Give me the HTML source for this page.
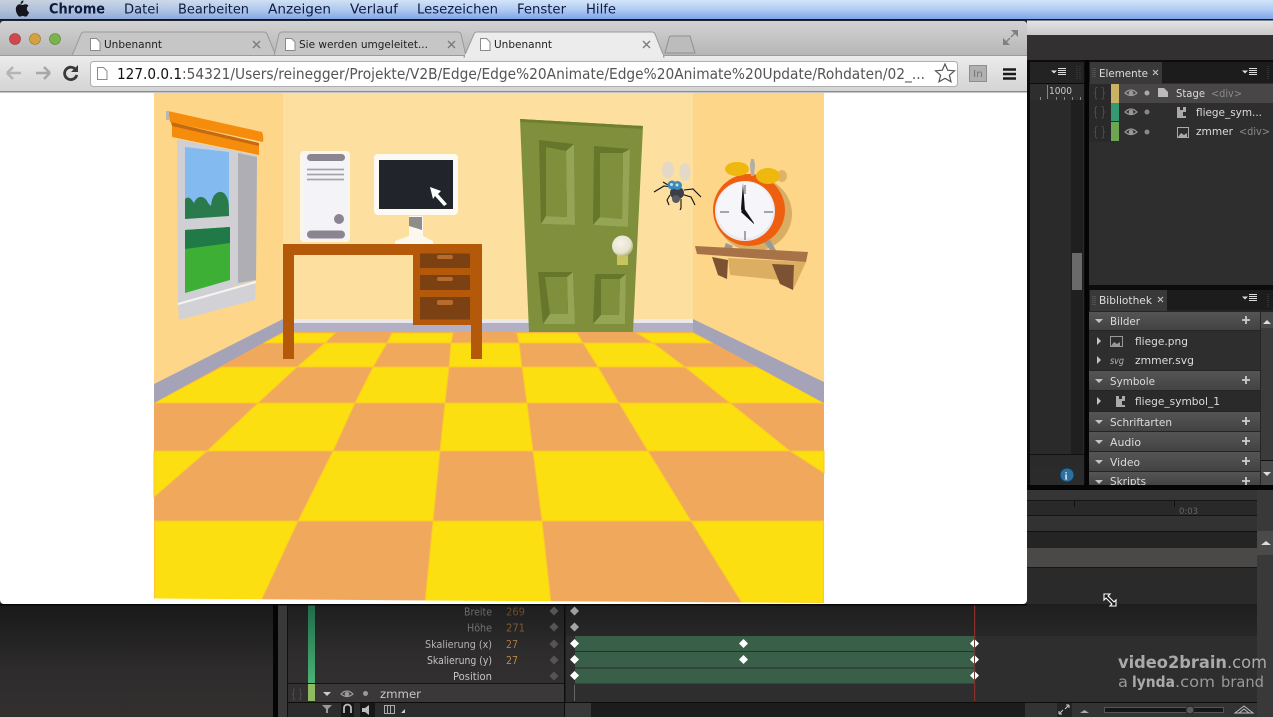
<!DOCTYPE html>
<html><head><meta charset="utf-8"><title>Unbenannt</title>
<style>html,body{margin:0;padding:0;background:#302e2e;overflow:hidden}svg{display:block}text{font-family:"DejaVu Sans","Liberation Sans",sans-serif;white-space:pre}</style></head>
<body>
<svg xmlns="http://www.w3.org/2000/svg" width="1273" height="717" viewBox="0 0 1273 717">
<defs>
<linearGradient id="menu" x1="0" y1="0" x2="0" y2="1"><stop offset="0" stop-color="#d3e4fa"/><stop offset=".5" stop-color="#b0cbf3"/><stop offset="1" stop-color="#7fa5ea"/></linearGradient>
<linearGradient id="menuL" x1="0" y1="0" x2="1" y2="0"><stop offset="0" stop-color="#b5b5b5" stop-opacity=".45"/><stop offset=".5" stop-color="#b5b5b5" stop-opacity=".1"/><stop offset="1" stop-color="#b5b5b5" stop-opacity="0"/></linearGradient>
<linearGradient id="strip" x1="0" y1="0" x2="0" y2="1"><stop offset="0" stop-color="#d2d2d2"/><stop offset="1" stop-color="#b2b2b2"/></linearGradient>
<linearGradient id="bar" x1="0" y1="0" x2="0" y2="1"><stop offset="0" stop-color="#ececec"/><stop offset="1" stop-color="#d4d4d4"/></linearGradient>
<linearGradient id="hdr" x1="0" y1="0" x2="0" y2="1"><stop offset="0" stop-color="#555"/><stop offset="1" stop-color="#434343"/></linearGradient>
<linearGradient id="btm" x1="0" y1="0" x2="0" y2="1"><stop offset="0" stop-color="#191919"/><stop offset=".6" stop-color="#2e2c2c"/><stop offset="1" stop-color="#322f2f"/></linearGradient>
<linearGradient id="tl" x1="0" y1="0" x2="0" y2="1"><stop offset="0" stop-color="#1e1e1e"/><stop offset=".5" stop-color="#2e2c2c"/><stop offset="1" stop-color="#333131"/></linearGradient>
<linearGradient id="grn" x1="0" y1="0" x2="0" y2="1"><stop offset="0" stop-color="#1e6a4a"/><stop offset="1" stop-color="#4ab274"/></linearGradient>
<linearGradient id="top" x1="0" y1="0" x2="0" y2="1"><stop offset="0" stop-color="#e4e4e4"/><stop offset="1" stop-color="#c8c8c8"/></linearGradient>
<radialGradient id="knob" cx=".4" cy=".35" r=".7"><stop offset="0" stop-color="#f6f4ea"/><stop offset=".7" stop-color="#e6e2cc"/><stop offset="1" stop-color="#a8a670"/></radialGradient>
<g id="eye"><path d="M-6 0Q0-6 6 0Q0 5-6 0Z" fill="none" stroke="#9a9a9a" stroke-width="1.2"/><circle r="2.3" fill="#9a9a9a"/></g>
<g id="menuic"><path d="M-8-2h6l-3 3z" fill="#ddd"/><path d="M-1-4h8M-1-2h8M-1 0h8M-1 2h8" stroke="#ddd" stroke-width="1"/></g>
<g id="plus"><path d="M-4 0h8M0-4v8" stroke="#ccc" stroke-width="1.8"/></g>
<path id="td" d="M-4-2h8l-4 4z" fill="#c4c4c4"/>
<path id="tr" d="M-2-4l4 4-4 4z" fill="#c4c4c4"/>
<path id="dia" d="M0-4.5L4.5 0 0 4.5-4.5 0z"/>
<path id="doc" d="M0 0h6l3.500 3.500V12H0z" fill="#fff" stroke="#8a8a8a" stroke-width="1"/>
<g id="brace"><text x="0" y="0" font-size="13" fill="#565656" textLength="13" lengthAdjust="spacingAndGlyphs">{ }</text></g>
</defs>

<!-- base -->
<rect width="1273" height="717" fill="#302e2e"/>

<!-- menu bar -->
<rect width="1273" height="19" fill="url(#menu)"/>
<rect width="520" height="19" fill="url(#menuL)"/>
<rect y="19" width="1273" height="1.5" fill="#0c1830"/>
<path d="M23.4 1.4c-1.6.2-3 1.7-2.8 3.500 1.600.1 3-1.600 2.800-3.500zM26.800 9.800c0-1.900 1.600-2.800 1.700-2.900-.9-1.400-2.400-1.600-2.900-1.600-1.200-.1-2.400.7-3 .7s-1.600-.7-2.700-.7c-1.400 0-2.700.8-3.400 2.100-1.400 2.500-.4 6.200 1 8.200.7 1 1.500 2.100 2.600 2 1 0 1.400-.7 2.700-.7s1.600.7 2.700.7 1.900-1 2.500-2c.8-1.100 1.100-2.200 1.100-2.300 0 0-2.300-.9-2.300-4.300z" fill="#15151f" transform="translate(0,-1)"/>
<g fill="#0f1b3e" font-size="13.5">
<text x="49" y="13.5" font-weight="bold" textLength="56" lengthAdjust="spacingAndGlyphs" font-size="14">Chrome</text>
<text x="124" y="13.5" textLength="35" lengthAdjust="spacingAndGlyphs">Datei</text>
<text x="178" y="13.5" textLength="71" lengthAdjust="spacingAndGlyphs">Bearbeiten</text>
<text x="268" y="13.5" textLength="63" lengthAdjust="spacingAndGlyphs">Anzeigen</text>
<text x="350" y="13.5" textLength="48" lengthAdjust="spacingAndGlyphs">Verlauf</text>
<text x="417" y="13.5" textLength="81" lengthAdjust="spacingAndGlyphs">Lesezeichen</text>
<text x="517" y="13.5" textLength="49" lengthAdjust="spacingAndGlyphs">Fenster</text>
<text x="586" y="13.5" textLength="30" lengthAdjust="spacingAndGlyphs">Hilfe</text>
</g>

<!-- desktop strip behind -->
<rect x="1027" y="20.5" width="246" height="15" fill="url(#top)"/>
<rect x="1027" y="35" width="246" height="27" fill="#323030"/>

<!-- upper right panels -->
<rect x="1027" y="60" width="246" height="430" fill="#0c0c0c"/>
<rect x="1030" y="62" width="54" height="21" fill="#232323"/>
<rect x="1030" y="84" width="54" height="16" fill="#2e2e2e"/>
<rect x="1030" y="100" width="54" height="368" fill="#2b2a2a"/>
<rect x="1071" y="100" width="12" height="354" fill="#1f1f1f"/>
<rect x="1072" y="253" width="10" height="37" fill="#6a6a6a"/>
<rect x="1030" y="466" width="54" height="20" fill="#2c2b2b"/>
<rect x="1030" y="454" width="54" height="1" fill="#111"/>
<path d="M1047.5 85v14M1040.500 97v3M1056.500 97v3M1064.500 97v3M1072.500 97v3M1080.500 97v3" stroke="#888" stroke-width="1"/>
<text x="1049" y="94" font-size="10" fill="#ccc" textLength="23" lengthAdjust="spacingAndGlyphs">1000</text>
<use href="#menuic" x="1059" y="72.5"/>
<path d="M1077 66v13M1080 66v13" stroke="#444" stroke-dasharray="1 1"/>
<circle cx="1067" cy="475" r="7" fill="#2d6f9e"/><circle cx="1067" cy="475" r="7" fill="none" stroke="#10364f"/>
<text x="1064.5" y="479.5" font-size="11" font-weight="bold" fill="#dbe9f2" style="font-family:'Liberation Serif',serif">i</text>

<rect x="1089" y="62" width="184" height="224" fill="#2f2e2e"/>
<rect x="1089" y="62" width="184" height="21" fill="#1c1c1c"/>
<rect x="1090" y="62" width="72" height="22" fill="#3a3939"/>
<path d="M1093 68v10M1095 68v10" stroke="#666" stroke-dasharray="1 1"/>
<text x="1099" y="77" font-size="10.5" fill="#dedede" textLength="49" lengthAdjust="spacingAndGlyphs">Elemente</text>
<path d="M1153 70l5 5M1158 70l-5 5" stroke="#ccc"/>
<use href="#menuic" x="1250" y="72.5"/>
<path d="M1268 66v13" stroke="#444" stroke-dasharray="1 1"/>
<rect x="1089" y="84" width="184" height="19" fill="#484646"/>
<rect x="1089" y="84" width="22" height="58" fill="#2a2929"/>
<rect x="1111" y="84" width="8" height="19" fill="#c9b264"/>
<rect x="1111" y="103" width="8" height="18" fill="#359a72"/>
<rect x="1111" y="122" width="8" height="19" fill="#6ea552"/>
<use href="#brace" x="1093" y="97"/><use href="#brace" x="1093" y="116"/><use href="#brace" x="1093" y="136"/>
<use href="#eye" x="1131" y="93"/><use href="#eye" x="1131" y="112"/><use href="#eye" x="1131" y="132"/>
<circle cx="1147" cy="93" r="2.5" fill="#aaa"/><circle cx="1147" cy="112" r="2.5" fill="#888"/><circle cx="1147" cy="132" r="2.5" fill="#888"/>
<path d="M1158 88h6l4 4v5h-10z" fill="#bbb"/>
<text x="1176" y="97" font-size="10.5" fill="#dcdcdc" textLength="29" lengthAdjust="spacingAndGlyphs">Stage</text>
<text x="1211" y="97" font-size="10.5" fill="#8a8a8a" textLength="31" lengthAdjust="spacingAndGlyphs">&lt;div&gt;</text>
<path d="M1177 107h3v3h3v-3h3v5h-3v4h3v2h-9z" fill="#aaa"/>
<text x="1196" y="116" font-size="10.5" fill="#dcdcdc" textLength="66" lengthAdjust="spacingAndGlyphs">fliege_sym...</text>
<rect x="1177.500" y="127.500" width="11" height="10" fill="none" stroke="#aaa"/><path d="M1178 137l3-4 3 2 3-2v4z" fill="#aaa"/>
<text x="1196" y="135" font-size="10.5" fill="#dcdcdc" textLength="37" lengthAdjust="spacingAndGlyphs">zmmer</text>
<text x="1239" y="135" font-size="10.5" fill="#8a8a8a" textLength="31" lengthAdjust="spacingAndGlyphs">&lt;div&gt;</text>

<!-- library -->
<rect x="1089" y="290" width="184" height="195" fill="#262525"/>
<rect x="1089" y="290" width="184" height="20" fill="#1c1c1c"/>
<rect x="1090" y="290" width="77" height="21" fill="#3a3939"/>
<path d="M1093 296v10M1095 296v10" stroke="#666" stroke-dasharray="1 1"/>
<text x="1099" y="304" font-size="10.5" fill="#dedede" textLength="53" lengthAdjust="spacingAndGlyphs">Bibliothek</text>
<path d="M1158 297l5 5M1163 297l-5 5" stroke="#ccc"/>
<use href="#menuic" x="1250" y="298.500"/>
<path d="M1268 294v13" stroke="#444" stroke-dasharray="1 1"/>
<rect x="1089" y="312" width="171" height="18" fill="url(#hdr)"/>
<rect x="1089" y="331" width="171" height="39" fill="#2f2e2e"/>
<rect x="1089" y="371" width="171" height="19" fill="url(#hdr)"/>
<rect x="1089" y="391" width="171" height="20" fill="#2b2a2a"/>
<rect x="1089" y="412" width="171" height="19" fill="url(#hdr)"/>
<rect x="1089" y="432" width="171" height="19" fill="url(#hdr)"/>
<rect x="1089" y="452" width="171" height="19" fill="url(#hdr)"/>
<rect x="1089" y="472" width="171" height="13" fill="url(#hdr)"/>
<rect x="1261" y="312" width="12" height="173" fill="#3c3b3b"/>
<rect x="1261" y="312" width="12" height="16" fill="#4a4a4a"/><path d="M1263 324l4-4 4 4z" fill="#ddd"/>
<rect x="1261" y="461" width="12" height="24" fill="#4a4a4a"/><rect x="1261" y="460" width="12" height="1" fill="#111"/><path d="M1263 472l4 4 4-4z" fill="#ddd"/>
<g font-size="10.5" fill="#dcdcdc">
<use href="#td" x="1099" y="321"/><text x="1110" y="325" textLength="30" lengthAdjust="spacingAndGlyphs">Bilder</text>
<use href="#td" x="1099" y="381"/><text x="1110" y="385" textLength="45" lengthAdjust="spacingAndGlyphs">Symbole</text>
<use href="#td" x="1099" y="422"/><text x="1110" y="426" textLength="62" lengthAdjust="spacingAndGlyphs">Schriftarten</text>
<use href="#td" x="1099" y="442"/><text x="1110" y="446" textLength="31" lengthAdjust="spacingAndGlyphs">Audio</text>
<use href="#td" x="1099" y="462"/><text x="1110" y="466" textLength="30" lengthAdjust="spacingAndGlyphs">Video</text>
<use href="#td" x="1099" y="482"/><text x="1110" y="485" textLength="36" lengthAdjust="spacingAndGlyphs">Skripts</text>
<text x="1135" y="345" textLength="53" lengthAdjust="spacingAndGlyphs">fliege.png</text>
<text x="1135" y="364" textLength="59" lengthAdjust="spacingAndGlyphs">zmmer.svg</text>
<text x="1135" y="405" textLength="85" lengthAdjust="spacingAndGlyphs">fliege_symbol_1</text>
</g>
<use href="#plus" x="1246" y="320"/><use href="#plus" x="1246" y="380"/><use href="#plus" x="1246" y="421"/><use href="#plus" x="1246" y="441"/><use href="#plus" x="1246" y="461"/><use href="#plus" x="1246" y="481"/>
<use href="#tr" x="1099" y="341"/><use href="#tr" x="1099" y="360"/><use href="#tr" x="1099" y="401"/>
<rect x="1110.500" y="336.500" width="12" height="10" fill="none" stroke="#999"/><path d="M1111 346l3-4 3 2 3-2v4z" fill="#999"/>
<text x="1110" y="364" font-size="10" font-style="italic" fill="#b4b4b4" textLength="14" lengthAdjust="spacingAndGlyphs">svg</text>
<path d="M1116 396h3v3h3v-3h3v5h-3v4h3v2h-9z" fill="#aaa"/>
<rect x="1085" y="285" width="188" height="5" fill="#0c0c0c"/>
<rect x="1085" y="60" width="4" height="430" fill="#050505"/>

<!-- timeline bars at right -->
<rect x="1027" y="485" width="246" height="5" fill="#050505"/>
<rect x="1027" y="490" width="230" height="10" fill="#363535"/>
<rect x="1027" y="500" width="230" height="16" fill="#2a2929"/>
<rect x="1027" y="500" width="230" height="1" fill="#151515"/>
<rect x="1027" y="515" width="230" height="1" fill="#151515"/>
<path d="M1074.500 501v6M1174.500 501v6" stroke="#111"/>
<text x="1179" y="514" font-size="9" fill="#666" textLength="19" lengthAdjust="spacingAndGlyphs">0:03</text>
<rect x="1027" y="516" width="230" height="15" fill="#333232"/>
<rect x="1027" y="531" width="230" height="1" fill="#111"/>
<rect x="1027" y="532" width="230" height="16" fill="#252424"/>
<rect x="1027" y="548" width="230" height="19" fill="#4a4948"/>
<rect x="1027" y="567" width="230" height="1" fill="#161616"/>
<rect x="1027" y="568" width="230" height="37" fill="#2b2a2a"/>
<rect x="1257" y="490" width="16" height="227" fill="#3a3939"/>
<rect x="1257" y="531" width="16" height="24" fill="#4a4a4a"/><path d="M1261 545l5-4 5 4z" fill="#ddd"/>

<!-- bottom region -->
<rect x="0" y="604" width="273" height="113" fill="url(#btm)"/>
<rect x="273" y="604" width="5" height="113" fill="#050505"/>
<rect x="278" y="604" width="9" height="113" fill="#3a3939"/>
<rect x="287" y="604" width="1" height="113" fill="#111"/>
<rect x="288" y="604" width="276" height="98" fill="url(#tl)"/>
<rect x="565" y="604" width="692" height="98" fill="url(#tl)"/>
<rect x="565" y="636" width="692" height="66" fill="#2f2e2e"/>
<rect x="564" y="604" width="1.5" height="113" fill="#0d0d0d"/>
<rect x="308" y="604" width="7" height="79" fill="url(#grn)"/>
<rect x="308" y="684" width="7" height="17" fill="#8fbc62"/>
<rect x="288" y="683" width="276" height="1" fill="#151515"/>
<rect x="315" y="684" width="249" height="18" fill="#3a3838"/>
<rect x="288" y="702" width="969" height="1" fill="#0d0d0d"/>
<rect x="288" y="703" width="276" height="14" fill="#2d2c2c"/>
<rect x="565" y="703" width="26" height="14" fill="#393838"/>
<rect x="591" y="703" width="434" height="14" fill="#1d1c1c"/>
<rect x="1025" y="703" width="232" height="14" fill="#343333"/>
<g font-size="10.5">
<text x="464" y="615.5" fill="#6a6a6a" textLength="28" lengthAdjust="spacingAndGlyphs">Breite</text>
<text x="467" y="631.5" fill="#727272" textLength="25" lengthAdjust="spacingAndGlyphs">Höhe</text>
<text x="425" y="648" fill="#b4b4b4" textLength="67" lengthAdjust="spacingAndGlyphs">Skalierung (x)</text>
<text x="427" y="664" fill="#c4c4c4" textLength="65" lengthAdjust="spacingAndGlyphs">Skalierung (y)</text>
<text x="453" y="680" fill="#c4c4c4" textLength="39" lengthAdjust="spacingAndGlyphs">Position</text>
</g>
<g font-size="10.5">
<text x="506" y="615.5" fill="#6b4a2c" textLength="19" lengthAdjust="spacingAndGlyphs">269</text>
<text x="506" y="631.5" fill="#7f5c34" textLength="19" lengthAdjust="spacingAndGlyphs">271</text>
<text x="506" y="648" fill="#a87b40" textLength="12" lengthAdjust="spacingAndGlyphs">27</text>
<text x="506" y="664" fill="#b68a44" textLength="12" lengthAdjust="spacingAndGlyphs">27</text>
</g>
<g fill="#555">
<use href="#dia" x="554" y="611"/><use href="#dia" x="554" y="627"/><use href="#dia" x="554" y="644"/><use href="#dia" x="554" y="660"/><use href="#dia" x="554" y="676"/>
</g>
<rect x="575" y="636" width="400" height="15" fill="#395f49"/>
<rect x="575" y="652" width="400" height="15.500" fill="#395f49"/>
<rect x="575" y="668.500" width="400" height="15" fill="#395f49"/>
<rect x="574" y="685" width="1" height="16" fill="#666"/>
<rect x="974" y="604" width="1.2" height="97" fill="#8a2f2a"/>
<use href="#dia" x="574.5" y="611" fill="#a0a0a0"/><use href="#dia" x="574.5" y="627" fill="#a6a6a6"/>
<g fill="#fff">
<use href="#dia" x="574.5" y="643.5"/><use href="#dia" x="574.5" y="659.5"/><use href="#dia" x="574.5" y="675.5"/>
<use href="#dia" x="743.5" y="643.5"/><use href="#dia" x="743.5" y="659.5"/>
<use href="#dia" x="974.5" y="643.5"/><use href="#dia" x="974.5" y="659.5"/><use href="#dia" x="974.5" y="675.5"/>
</g>
<rect x="974" y="638" width="1" height="44" fill="#6a3a34"/>
<text x="291" y="698" font-size="12" fill="#555" textLength="12" lengthAdjust="spacingAndGlyphs">{ }</text>
<path d="M323 692h8l-4 4z" fill="#ccc"/>
<use href="#eye" x="347" y="694"/>
<circle cx="365.500" cy="693.500" r="2.500" fill="#999"/>
<text x="380" y="698" font-size="11.500" fill="#c8c8c8" textLength="41" lengthAdjust="spacingAndGlyphs">zmmer</text>
<path d="M322 705h10l-4 4v4h-2v-4z" fill="#999"/>
<rect x="341" y="703" width="13" height="14" fill="#171717"/><path d="M344 713v-5a3 3 0 0 1 7 0v5" fill="none" stroke="#bbb" stroke-width="1.800"/>
<rect x="360" y="703" width="15" height="14" fill="#171717"/><path d="M362 708h3l4-3v10l-4-3h-3z" fill="#bbb"/>
<rect x="384.500" y="705.500" width="10" height="8" fill="none" stroke="#aaa"/><path d="M387.500 705v8M390.500 705v8" stroke="#aaa"/><path d="M401 713h4v-4z" fill="#ccc"/>
<rect x="1057" y="703" width="15" height="14" fill="#252424"/>
<path d="M1059 714l4-4M1059 714v-3M1059 714h3M1069 705l-4 4M1069 705v3M1069 705h-3" stroke="#ccc" fill="none"/>
<path d="M1080 713l4.500-3 4.500 3z" fill="#aaa"/>
<rect x="1104.500" y="707.500" width="119" height="5" fill="#161616" stroke="#555"/>
<circle cx="1190" cy="710" r="4" fill="#5a5a5a" stroke="#222"/>
<path d="M1235 713l9-7 9 7zM1239 713l5-4 5 4" fill="none" stroke="#bbb"/>
<text x="1118" y="668" font-size="16.500" font-weight="bold" fill="#aaa" textLength="109" lengthAdjust="spacingAndGlyphs">video2brain</text>
<text x="1227" y="668" font-size="16.500" fill="#aaa" textLength="40" lengthAdjust="spacingAndGlyphs">.com</text>
<text x="1118" y="687" font-size="15" fill="#999" textLength="10" lengthAdjust="spacingAndGlyphs">a</text>
<text x="1132" y="687" font-size="15" font-weight="bold" fill="#aaa" textLength="43" lengthAdjust="spacingAndGlyphs">lynda</text>
<text x="1175" y="687" font-size="15" fill="#999" textLength="40" lengthAdjust="spacingAndGlyphs">.com</text>
<text x="1221" y="687" font-size="15" fill="#999" textLength="43" lengthAdjust="spacingAndGlyphs">brand</text>
<path d="M1104 594h6l-2 2 6 6 2-2v6h-6l2-2-6-6-2 2z" fill="#111" stroke="#fff" stroke-width="1.100"/>

<!-- chrome window -->
<rect x="0" y="21" width="1027" height="583" rx="4" fill="#fff"/>
<path d="M0 25a4 4 0 0 1 4-4h1019a4 4 0 0 1 4 4v35H0z" fill="url(#strip)"/>
<circle cx="15" cy="39" r="5.500" fill="#d3464f" stroke="#8a3a3e" stroke-width=".6"/>
<circle cx="35" cy="39" r="5.500" fill="#d6a03c" stroke="#8e7a3c" stroke-width=".6"/>
<circle cx="55" cy="39" r="5.500" fill="#7bb24a" stroke="#5b8340" stroke-width=".6"/>
<path d="M72 56L81 34q1-2 3-2H264q2 0 3 2L276 56z" fill="#c6c6c6" stroke="#9a9a9a"/>
<path d="M274 56L279 34q1-2 3-2H458q2 0 3 2L466 56z" fill="#c6c6c6" stroke="#9a9a9a"/>
<path d="M665 53L669 38q.5-2 2-2H690l5 17z" fill="#bcbcbc" stroke="#8f8f8f"/>
<rect y="55" width="1027" height="1" fill="#9b9b9b"/>
<rect y="56" width="1027" height="35" fill="url(#bar)"/>
<path d="M464 57L474 34q1-2 3-2H652q2 0 3 2L664 57z" fill="#ececec" stroke="#9a9a9a"/>
<rect x="465" y="54" width="198" height="4" fill="#ececec"/>
<rect y="91" width="1027" height="1.500" fill="#8c8c8c"/>
<use href="#doc" x="90.500" y="38.500"/><use href="#doc" x="285.500" y="38.500"/><use href="#doc" x="480.500" y="38.500"/>
<g font-size="10.500" fill="#1e1e1e">
<text x="104" y="48" textLength="58" lengthAdjust="spacingAndGlyphs">Unbenannt</text>
<text x="299" y="48" textLength="129" lengthAdjust="spacingAndGlyphs">Sie werden umgeleitet...</text>
<text x="494" y="48" textLength="58" lengthAdjust="spacingAndGlyphs">Unbenannt</text>
</g>
<path d="M253 41l7 7M260 41l-7 7M448 41l7 7M455 41l-7 7M643 41l7 7M650 41l-7 7" stroke="#7a7a7a" stroke-width="1.400"/>
<path d="M1018 30h-7l7 7zM1003 45h7l-7-7z" fill="#808080"/>
<path d="M1005 43l5-5M1011 37l5-5" stroke="#808080" stroke-width="1.400"/>
<path d="M7 73h14M7 73l6-6M7 73l6 6" stroke="#b4b4b4" stroke-width="2.600" fill="none"/>
<path d="M50 73H36M50 73l-6-6M50 73l-6 6" stroke="#a8a8a8" stroke-width="2.600" fill="none"/>
<path d="M76 70a6.200 6.200 0 1 0 .8 5" fill="none" stroke="#3a3a3a" stroke-width="2.800"/><path d="M78 65v7h-7z" fill="#3a3a3a"/>
<rect x="90.500" y="61.500" width="867" height="25" rx="3" fill="#fff" stroke="#aeaeae"/>
<use href="#doc" x="97.500" y="67.500"/>
<text x="117" y="79" font-size="15" fill="#111" textLength="65" lengthAdjust="spacingAndGlyphs">127.0.0.1</text>
<text x="182" y="79" font-size="15" fill="#555" textLength="743" lengthAdjust="spacingAndGlyphs">:54321/Users/reinegger/Projekte/V2B/Edge/Edge%20Animate/Edge%20Animate%20Update/Rohdaten/02_...</text>
<path d="M945 64l2.700 6.200 6.800.6-5.100 4.400 1.600 6.600-6-3.500-6 3.500 1.600-6.600-5.100-4.400 6.800-.6z" fill="#fff" stroke="#555" stroke-width="1.200"/>
<rect x="969.500" y="65.500" width="17" height="16" fill="#b0b0b0" stroke="#8e8e8e"/>
<text x="973" y="77" font-size="9.500" fill="#777" textLength="10" lengthAdjust="spacingAndGlyphs">In</text>
<path d="M1003 69.500h13M1003 74h13M1003 78.500h13" stroke="#1a1a1a" stroke-width="2.600"/>

<!-- scene walls -->
<rect x="154" y="93" width="670" height="240" fill="#fddf9f"/>
<rect x="154" y="93" width="129" height="310" fill="#fdd68a"/>
<rect x="693" y="93" width="131" height="310" fill="#fdd68a"/>

<!-- floor -->
<path d="M283 331H693L824 402V604H154V402z" fill="#f0a95c"/>
<g fill="#fcdf10" stroke="#fdc62e" stroke-width="1">
<path d="M283 333H335L325 343H263z"/><path d="M392 333H453L451 343H387z"/><path d="M517 333H577L583 343H519z"/><path d="M637 333H693L713 343H653z"/>
<path d="M325 343H387L373 367H297z"/><path d="M451 343H519L522 367H449z"/><path d="M583 343H653L685 367H598z"/>
<path d="M222 367H297L258 403H154z"/><path d="M373 367H449L445 403H355z"/><path d="M522 367H598L619 403H527z"/><path d="M685 367H757L824 403H730z"/>
<path d="M258 403H355L333 451H207z"/><path d="M445 403H527L533 451H440z"/><path d="M619 403H730L790 451H648z"/>
<path d="M154 451H207L154 497z"/><path d="M333 451H440L433 521H298z"/><path d="M533 451H648L691 521H542z"/><path d="M790 451H824V473z"/>
<path d="M154.500 521H298L260 603H154.500z"/><path d="M433 521H542L551 603H425z"/><path d="M691 521H823.500V603H742z"/>
</g>
<path d="M150 598.500L430 600.500 825 603V604H150z" fill="#fff"/>

<!-- baseboards -->
<rect x="283" y="319" width="410" height="4" fill="#ece8ea"/>
<rect x="283" y="323" width="410" height="9" fill="#b3b0c6"/>
<path d="M283 319L154 384V403L283 332z" fill="#a5a3b8"/>
<path d="M693 319L824 382V403L693 332z" fill="#a5a3b8"/>

<!-- window -->
<path d="M177 139L257 155 256 280 178 304z" fill="#cfcfd4"/>
<path d="M238 153L257 157 256 280 238 283z" fill="#aeaeb4"/>
<path d="M185 147L229 152V216L185 219z" fill="#83baf0"/>
<path d="M185 219V199q3-3 6 0l3 4q3-7 8-6 4 1 6 6l3 3q1-12 8-14 6-1 9 8 1 3 1 16z" fill="#2a7a4c"/>
<path d="M185 230L230 227V280L185 293z" fill="#3caf34"/>
<path d="M185 230L230 227V243L185 249z" fill="#1f7a48"/>
<path d="M178 303L256 281 255 300 179 320z" fill="#d2d2d6"/>
<path d="M178 304L256 282" stroke="#f4f4f4" stroke-width="2" fill="none"/>
<path d="M172 124L259 144V155L172 137z" fill="#f68c0c"/>
<path d="M168 111L262 132q2 4 1 10L170 122z" fill="#f68c0c"/>
<path d="M171 122L259 143 259 146 172 126z" fill="#c66a10"/>
<rect x="166" y="111" width="3" height="9" fill="#b8b8b0"/>

<!-- tower -->
<rect x="300" y="151" width="50" height="91" rx="4" fill="#fbf6ea"/>
<rect x="303" y="153" width="45" height="87" rx="2" fill="#f4f4f8"/>
<rect x="307" y="154" width="38" height="7" rx="3.500" fill="#8a8590"/>
<rect x="307" y="230.500" width="38" height="8" rx="4" fill="#8a8590"/>
<path d="M307 169.500h37M307 174.500h37M307 179.500h37" stroke="#a7a3ab" stroke-width="1.800"/>
<circle cx="339" cy="219" r="5" fill="#8a8590"/>

<!-- monitor -->
<path d="M409 216h14v20l10 5v3h-38v-3l14-5z" fill="#fbf8f0"/>
<path d="M409 217h13v13l-13-4z" fill="#8f8c8c"/>
<rect x="374" y="154" width="84" height="61" rx="4" fill="#fdfaf3"/>
<rect x="379" y="160" width="74" height="49" fill="#22242b"/>
<path d="M430 187L441 191 438 194 447 204 444 206 435 196 433 199z" fill="#fff"/>

<!-- desk -->
<rect x="283" y="244" width="199" height="11" fill="#b4580a"/>
<rect x="283" y="255" width="11" height="104" fill="#b4580a"/>
<rect x="471" y="325" width="11" height="34" fill="#b4580a"/>
<rect x="413" y="255" width="69" height="70" fill="#b4580a"/>
<rect x="420" y="253.500" width="50" height="14.500" fill="#7c4112"/>
<rect x="420" y="275" width="50" height="15" fill="#7c4112"/>
<rect x="420" y="297" width="50" height="22.500" fill="#7c4112"/>
<rect x="437" y="255" width="16" height="4" rx="2" fill="#b86c2c"/>
<rect x="437" y="277" width="16" height="4" rx="2" fill="#b86c2c"/>
<rect x="437" y="300" width="16" height="5" rx="2" fill="#b86c2c"/>

<!-- door -->
<path d="M520 119L643 126 633 332H529z" fill="#7f8f3b"/>
<path d="M520 119L643 126 642 129 521 122z" fill="#6f7f30"/>
<g>
<path d="M539 140L574 144 575 225 541 224z" fill="#66762a"/>
<path d="M574 144L575 225 541 224 546 216 567 217 566 151z" fill="#95a455"/>
<path d="M546 147L566 151 567 217 546 216z" fill="#7f8f3b"/>
<path d="M594 146L630 149 628 227 593 225z" fill="#66762a"/>
<path d="M630 149L628 227 593 225 600 217 622 219 623 153z" fill="#95a455"/>
<path d="M600 153L623 153 622 219 600 217z" fill="#7f8f3b"/>
<path d="M538 272H573L575 324H543z" fill="#66762a"/>
<path d="M573 272L575 324H543L550 314H568L567 277z" fill="#95a455"/>
<path d="M545 277H567L568 314H550z" fill="#7f8f3b"/>
<path d="M595 274H626L625 324H593z" fill="#66762a"/>
<path d="M626 274L625 324H593L601 315H619L620 279z" fill="#95a455"/>
<path d="M601 279H620L619 315H601z" fill="#7f8f3b"/>
</g>
<rect x="617" y="255" width="11" height="10" fill="#c6c45c"/>
<circle cx="622.500" cy="246" r="10.500" fill="url(#knob)"/>

<!-- fly -->
<ellipse cx="668" cy="170" rx="6" ry="8.500" fill="#cdd3e6" opacity=".55"/>
<ellipse cx="685" cy="172" rx="5.500" ry="9" fill="#cdd3e6" opacity=".55"/>
<g stroke="#111" stroke-width="1.100" fill="none">
<path d="M672 187L664 186 654 192M668 185l-5-3M684 190L693 189 701 197M681 194L691 197 695 205M670 195L667 200 669 205M681 199L681 208 680 210"/>
</g>
<ellipse cx="677" cy="193" rx="7" ry="6.500" fill="#3a3e48"/>
<ellipse cx="676" cy="199" rx="4" ry="4" fill="#5a5a60"/>
<circle cx="672" cy="185" r="4.500" fill="#3d89b8"/><circle cx="677.500" cy="185.500" r="4.500" fill="#3d89b8"/>
<circle cx="671.500" cy="184.500" r="1.500" fill="#bce0f4"/><circle cx="677" cy="185" r="1.500" fill="#bce0f4"/>

<!-- shelf shadow and clock -->
<path d="M728 258L806 262 793 290 780 280 730 275z" fill="#dcae62"/>
<ellipse cx="754" cy="214" rx="38" ry="37" fill="#d9ad64"/>
<ellipse cx="782" cy="176" rx="5" ry="6" fill="#e0b468"/>
<path d="M726 243l-3 8 6 2 4-7zM764 242l9 12 4-2-7-12z" fill="#9a9a94"/>
<circle cx="749" cy="210" r="36" fill="#ee5f10"/>
<ellipse cx="737" cy="169" rx="12" ry="7" fill="#eeb80e"/>
<ellipse cx="768" cy="176" rx="12" ry="8" fill="#eeb80e"/>
<path d="M750 165l1-6h3l1 6-1 11h-3z" fill="#b0aea6"/>
<circle cx="745" cy="211" r="30" fill="#eaeaf2"/>
<circle cx="745" cy="210" r="28" fill="#f6f6fa"/>
<g stroke="#8a8a8a" stroke-width="1.500"><path d="M745 185v9M745 231v9M720 212h9M764 212h9"/></g>
<path d="M743 183l2 28-3 1-1-3zM741 212l3-4 10 15 0 1z" fill="#111"/>

<!-- shelf -->
<path d="M695 246L808 252 806 262 697 254z" fill="#a87248"/>
<path d="M712 257L728 260 727 279 718 275z" fill="#7c5232"/>
<path d="M772 264L794 265 793 290 780 284z" fill="#7c5232"/>

<!-- bottom window edge -->
<rect x="0" y="604" width="1027" height="1.500" fill="#080808"/>
</svg>
</body></html>
